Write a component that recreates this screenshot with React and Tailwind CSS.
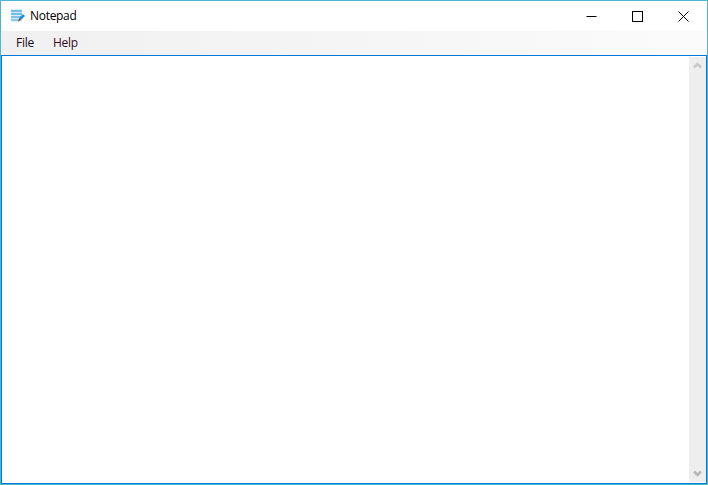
import React from 'react';

function AppIcon() {
  return (
    <svg width="16" height="16" viewBox="0 0 16 16" className="shrink-0">
      <rect x="1" y="1" width="11" height="13" fill="#d8edf9" />
      <rect x="1" y="2" width="11" height="2" fill="#74bdea" />
      <rect x="1" y="5" width="11" height="2" fill="#74bdea" />
      <rect x="1" y="8" width="10" height="2" fill="#7cc2ec" />
      <rect x="1" y="11" width="7" height="2" fill="#8ccbf0" />
      <path d="M9 10 L13 6 L15 8 L11 12 Z" fill="#1f8fe0" />
      <path d="M9 10 L11 12 L8 13.5 Z" fill="#6b4a1e" />
    </svg>
  );
}

function WindowButton({ children }) {
  return <div className="w-[46px] h-full flex items-center justify-center">{children}</div>;
}

export default function App() {
  return (
    <div className="w-[708px] h-[485px] flex flex-col bg-white border border-[#4db8d0] font-['Open_Sans',sans-serif] overflow-hidden">
      {/* title bar */}
      <div className="h-[30px] shrink-0 flex items-center justify-between">
        <div className="flex items-center gap-[4px] pl-[9px]">
          <AppIcon />
          <span className="text-[12px] tracking-[-0.3px] text-black leading-none">Notepad</span>
        </div>
        <div className="flex h-full pr-[1px]">
          <WindowButton>
            <svg width="11" height="11" viewBox="0 0 11 11"><path d="M0.5 5.5H10.5" stroke="#000" strokeWidth="1" /></svg>
          </WindowButton>
          <WindowButton>
            <svg width="11" height="11" viewBox="0 0 11 11"><rect x="0.5" y="0.5" width="10" height="10" fill="none" stroke="#000" strokeWidth="1" /></svg>
          </WindowButton>
          <WindowButton>
            <svg width="11" height="11" viewBox="0 0 11 11"><path d="M0.5 0.5L10.5 10.5M10.5 0.5L0.5 10.5" stroke="#000" strokeWidth="1" /></svg>
          </WindowButton>
        </div>
      </div>

      {/* menu bar */}
      <div className="h-[24px] shrink-0 flex items-center bg-gradient-to-r from-[#f0f0f0] to-[#fbfbfb] text-[12px] tracking-[-0.25px]">
        <span className="ml-[15px] text-[#1a0a1a]">File</span>
        <span className="ml-[19px] text-[#3a0a24]">Help</span>
      </div>

      {/* editor */}
      <div className="flex-1 flex min-h-0 border border-[#0078d7]">
        <div className="flex-1" />
        <div className="w-[17px] my-[1px] flex flex-col items-center justify-between bg-[#eeeeee] py-[5px]">
          <svg width="9" height="7" viewBox="0 0 9 7"><path d="M1 5.5L4.5 2L8 5.5" fill="none" stroke="#c8c8c8" strokeWidth="2.5" /></svg>
          <svg width="9" height="7" viewBox="0 0 9 7"><path d="M1 1.5L4.5 5L8 1.5" fill="none" stroke="#b8b8b8" strokeWidth="2.5" /></svg>
        </div>
      </div>
    </div>
  );
}
